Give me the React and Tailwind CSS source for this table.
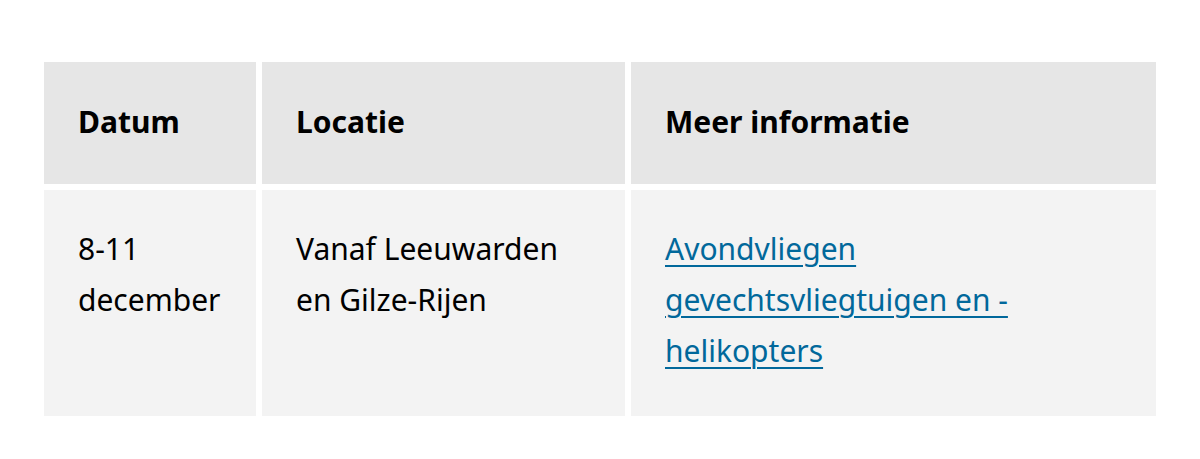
export default function App() {
  const head = "bg-[#e6e6e6] pl-[34px] pr-10 pt-[34px] pb-[37px] font-bold";
  const cell = "bg-[#f3f3f3] pl-[34px] pr-10 pt-[33px] pb-[40px]";
  return (
    <div
      className="min-h-screen bg-white px-[44px] pt-[62px] text-[30px] leading-[51px] text-[#000]"
      style={{ fontFamily: "'Noto Sans', 'Open Sans', Arial, sans-serif" }}
    >
      <div className="grid grid-cols-[212px_363px_525px] gap-[6px]">
        <div className={head}>Datum</div>
        <div className={head}>Locatie</div>
        <div className={head}>Meer informatie</div>

        <div className={cell}>8-11 december</div>
        <div className={cell}>Vanaf Leeuwarden en Gilze-Rijen</div>
        <div className={cell}>
          <a href="#" className="text-[#01689b] underline underline-offset-[5px] decoration-[2px]">
            Avondvliegen gevechtsvliegtuigen en -helikopters
          </a>
        </div>
      </div>
    </div>
  );
}
